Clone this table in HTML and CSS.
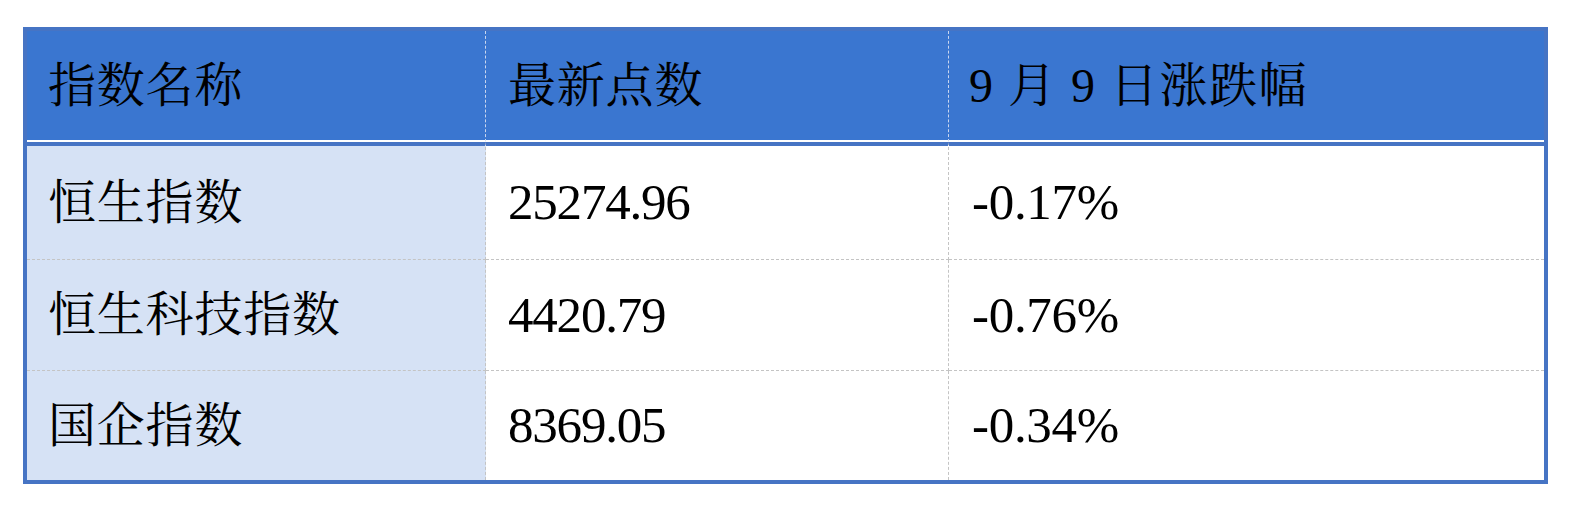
FILE: index.html
```html
<!DOCTYPE html>
<html lang="zh-CN">
<head>
<meta charset="utf-8">
<title>指数表</title>
<link rel="stylesheet" href="styles.css">
</head>
<body>
<table class="idx">
  <thead>
    <tr>
      <th class="c1">指数名称</th>
      <th class="c2">最新点数</th>
      <th class="c3">9 月 9 日涨跌幅</th>
    </tr>
  </thead>
  <tbody>
    <tr class="r1">
      <td class="c1">恒生指数</td>
      <td class="c2 num">25274.96</td>
      <td class="c3 num">-0.17%</td>
    </tr>
    <tr class="r2">
      <td class="c1">恒生科技指数</td>
      <td class="c2 num">4420.79</td>
      <td class="c3 num">-0.76%</td>
    </tr>
    <tr class="r3">
      <td class="c1">国企指数</td>
      <td class="c2 num">8369.05</td>
      <td class="c3 num">-0.34%</td>
    </tr>
  </tbody>
</table>
</body>
</html>
```

FILE: styles.css
```css
html, body {
  margin: 0;
  padding: 0;
  background: #ffffff;
}

body {
  padding: 27px 0 0 23px;
}

.idx {
  border-collapse: separate;
  border-spacing: 0;
  border: 4px solid #4674c4;
  width: 1525px;
  table-layout: fixed;
  font-family: "Liberation Serif", "Noto Serif CJK SC", "Noto Sans CJK SC", serif;
  font-size: 48px;
  font-weight: 400;
  color: #000000;
}

.idx th,
.idx td {
  box-sizing: border-box;
  padding: 0 0 0 21px;
  text-align: left;
  vertical-align: middle;
  font-weight: 400;
  white-space: nowrap;
  line-height: 1;
  letter-spacing: 0.8px;
}

.idx th {
  background: #3a76d0;
  height: 111px;
  border-bottom: 2px solid #ffffff;
}

.idx th.c1,
.idx th.c2 {
  border-right: 1px dashed #c9d6ef;
}

.idx th.c1 { width: 459px; }
.idx th.c2 { width: 463px; padding-left: 22px; }
.idx th.c3 { padding-left: 20px; letter-spacing: 1.5px; }

.idx td.c1 {
  background: #d6e2f5;
}

.idx td.c1,
.idx td.c2 {
  border-right: 1px dashed #c4c4c4;
}

.idx td.num {
  font-size: 51px;
  letter-spacing: -1.2px;
}

.idx td.c2 { padding-left: 22px; }
.idx td.c3 { padding-left: 23px; letter-spacing: -0.3px; }

.idx .r1 td {
  border-top: 4px solid #4674c4;
  border-bottom: 1px dashed #c4c4c4;
  height: 118px;
}

.idx .r2 td {
  border-bottom: 1px dashed #c4c4c4;
  height: 111px;
}

.idx .r3 td {
  height: 109px;
}
```
